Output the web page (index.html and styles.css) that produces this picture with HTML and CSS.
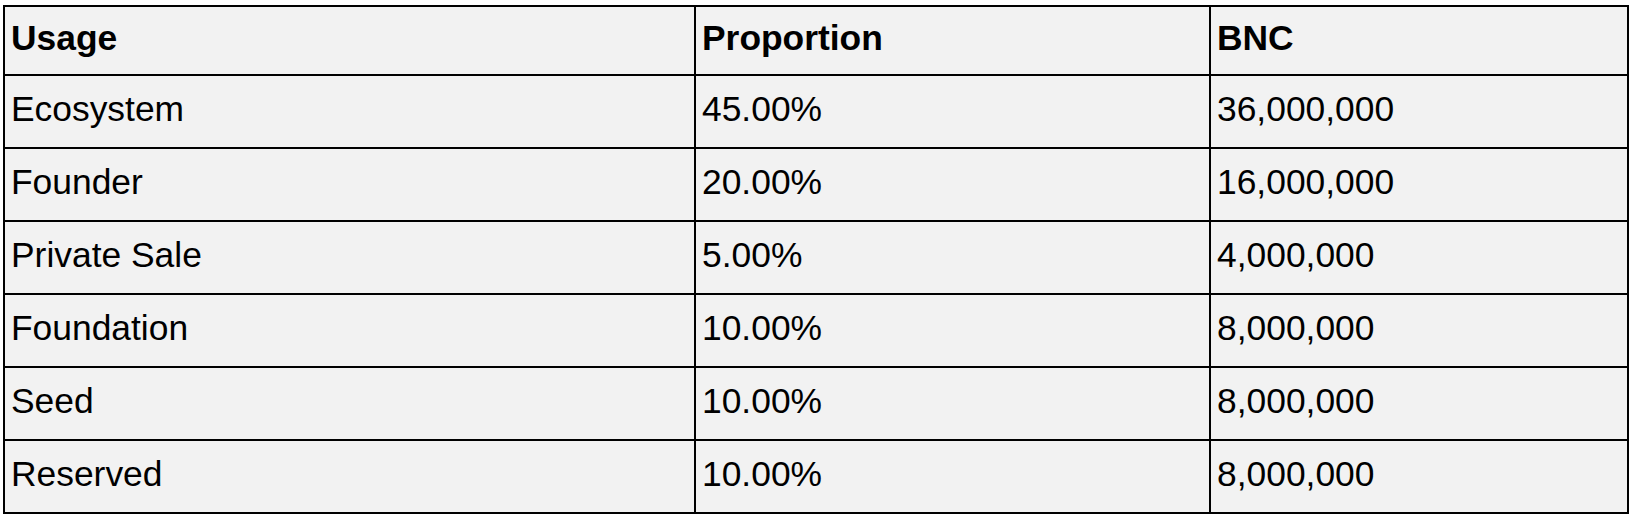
FILE: index.html
```html
<!DOCTYPE html>
<html lang="en">
<head>
<meta charset="utf-8">
<title>BNC Allocation</title>
<link rel="stylesheet" href="styles.css">
</head>
<body>
<table class="alloc">
  <colgroup>
    <col class="c-usage">
    <col class="c-prop">
    <col class="c-bnc">
  </colgroup>
  <thead>
    <tr class="head-row"><th>Usage</th><th>Proportion</th><th>BNC</th></tr>
  </thead>
  <tbody>
    <tr><td>Ecosystem</td><td>45.00%</td><td>36,000,000</td></tr>
    <tr><td>Founder</td><td>20.00%</td><td>16,000,000</td></tr>
    <tr><td>Private Sale</td><td>5.00%</td><td>4,000,000</td></tr>
    <tr><td>Foundation</td><td>10.00%</td><td>8,000,000</td></tr>
    <tr><td>Seed</td><td>10.00%</td><td>8,000,000</td></tr>
    <tr><td>Reserved</td><td>10.00%</td><td>8,000,000</td></tr>
  </tbody>
</table>
</body>
</html>
```
FILE: styles.css
```css
html, body {
  margin: 0;
  padding: 0;
  background: #ffffff;
}
body {
  padding: 5px 0 0 3px;
}
.alloc {
  border-collapse: collapse;
  width: 1624px;
  table-layout: fixed;
  background: #f2f2f2;
  font-family: "Liberation Sans", Arial, sans-serif;
  font-size: 35.4px;
  color: #000;
}
.c-usage { width: 691px; }
.c-prop { width: 515px; }
.c-bnc { width: 418px; }
.alloc th,
.alloc td {
  border: 2px solid #000;
  padding: 0 0 4px 6px;
  text-align: left;
  vertical-align: middle;
  line-height: 1.15;
  white-space: nowrap;
}
.alloc th {
  font-weight: bold;
}
.head-row { height: 69px; }
.alloc tbody tr { height: 73px; }
```
